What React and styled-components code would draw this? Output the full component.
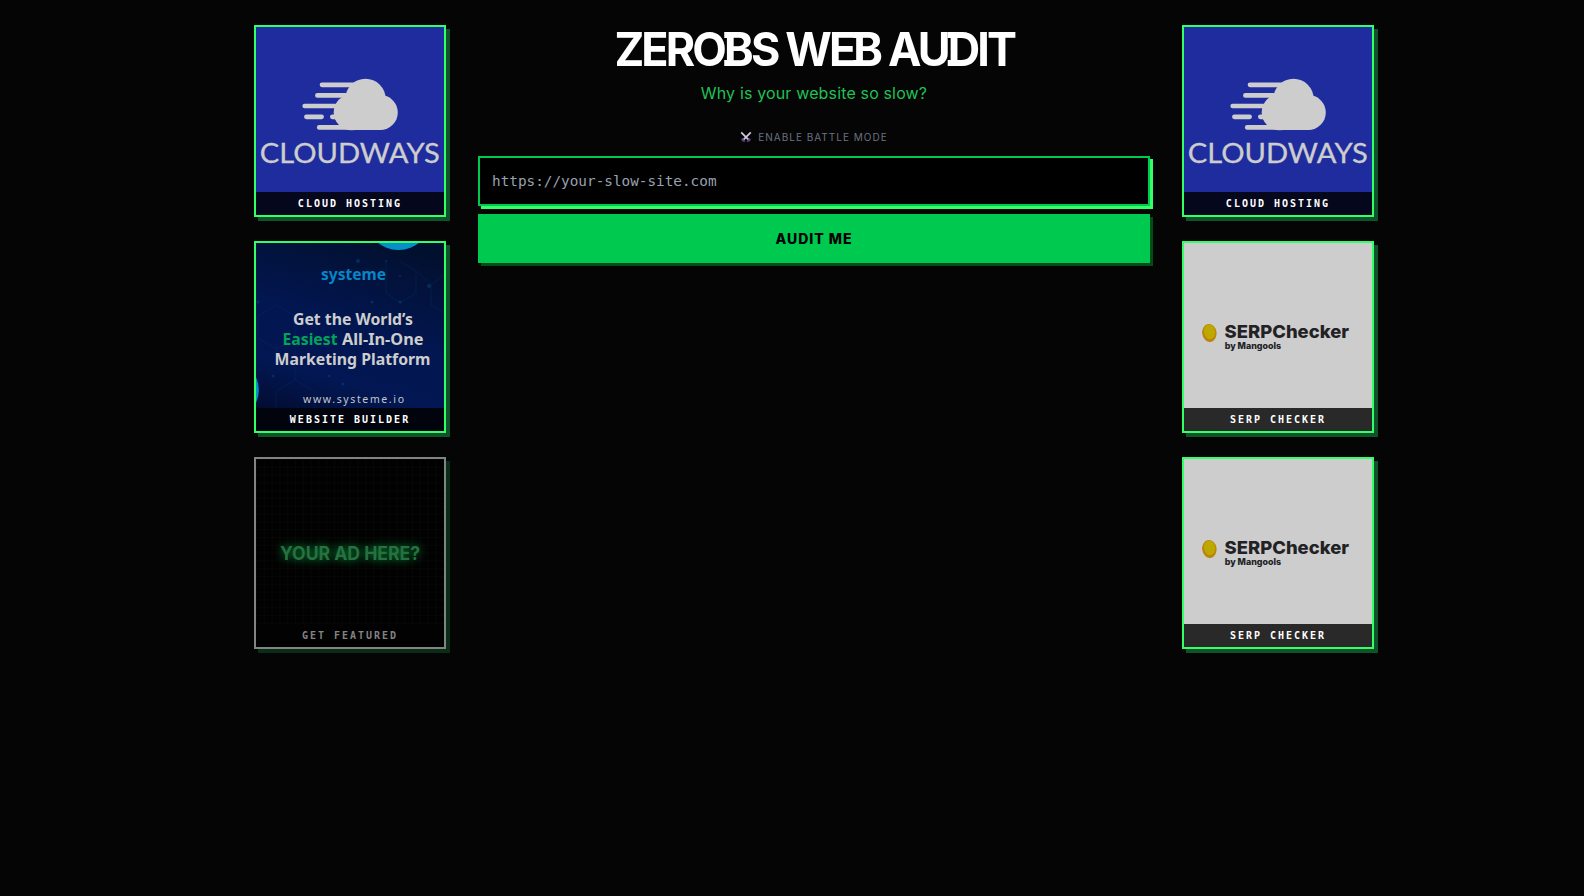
import React from 'react';
import styled, { createGlobalStyle } from 'styled-components';

const GlobalStyle = createGlobalStyle`
    * {
        box-sizing: border-box;
    }

    body {
        margin: 0;
        background: #050505;
        color: #ffffff;
        font-family: Inter, sans-serif;
    }
`;

const CloudwaysBanner = () => (
    <Banner viewBox="0 0 188 188">
        <rect width="188" height="188" fill="#1f2c9d" />
        <g fill="#cdcdcd">
            <circle cx="109.5" cy="72" r="20.2" />
            <circle cx="95.7" cy="85.3" r="18" />
            <circle cx="124.3" cy="85.5" r="17.5" />
            <rect x="95" y="80" width="30" height="23" />
        </g>
        <path
            d="M66 57.8H100M61.4 68.4H92M48.7 79H85M50.4 89.8H65.6M76.3 89.8H85M63.2 100.4H96"
            stroke="#cdcdcd"
            strokeWidth="4.7"
            strokeLinecap="round"
        />
        <text
            x="3.8"
            y="135.8"
            textLength="180"
            lengthAdjust="spacingAndGlyphs"
            fontFamily="Lato"
            fontSize="27.3"
            fill="#cdcdcd"
            stroke="#cdcdcd"
            strokeWidth="0.3"
        >
            CLOUDWAYS
        </text>
    </Banner>
);

const SystemeBanner = () => (
    <Banner viewBox="0 0 188 188">
        <defs>
            <linearGradient id="navy" x1="0.7" y1="0" x2="0.4" y2="1">
                <stop offset="0" stopColor="#02102f" />
                <stop offset="0.45" stopColor="#021650" />
                <stop offset="0.75" stopColor="#021753" />
                <stop offset="1" stopColor="#020c30" />
            </linearGradient>
        </defs>
        <rect width="188" height="188" fill="url(#navy)" />
        <g fill="none" stroke="#0a3a74" strokeWidth="0.7" opacity="0.4">
            <path d="M20.5 62L39 73V95L20.5 106L2 95V73Z" />
            <path d="M39 137L58 148V168M39 137L20 148V168M39 137V106" />
            <path d="M160 28L175 42V62L188 70M175 42L188 32M130 18V50L144 60L160 50V28L144 18" />
        </g>
        <g fill="#0a4a86" opacity="0.45">
            <circle cx="102" cy="18" r="2" />
            <circle cx="173" cy="43" r="2" />
            <circle cx="144" cy="59" r="1.5" />
            <circle cx="116" cy="59" r="1.5" />
            <circle cx="144" cy="33" r="1" />
            <circle cx="130" cy="18" r="1" />
            <circle cx="2" cy="59" r="1.5" />
            <circle cx="17" cy="133" r="1.5" />
            <circle cx="73" cy="133" r="1.2" />
            <circle cx="87" cy="141" r="1.5" />
        </g>
        <circle cx="142.5" cy="-26" r="33" fill="#0590ca" />
        <circle cx="-27" cy="147" r="29.8" fill="#0590ca" />
        <g fontFamily="Noto Sans, sans-serif" fontSize="16.5" fontWeight="700" fill="#cdcdcd">
            <text x="65" y="37" textLength="65" lengthAdjust="spacingAndGlyphs" fill="#0785c7">systeme</text>
            <text x="37" y="82" textLength="120" lengthAdjust="spacingAndGlyphs">Get the World’s</text>
            <text x="26.5" y="102" textLength="55" lengthAdjust="spacingAndGlyphs" fill="#02a35b">Easiest</text>
            <text x="86" y="102" textLength="81.5" lengthAdjust="spacingAndGlyphs">All-In-One</text>
            <text x="18.5" y="122.3" textLength="156" lengthAdjust="spacingAndGlyphs">Marketing Platform</text>
        </g>
        <text x="47" y="160" textLength="101" fontFamily="Noto Sans, sans-serif" fontSize="10.5" fill="#c3c7d0">
            www.systeme.io
        </text>
    </Banner>
);

const PlaceholderBanner = () => (
    <Banner viewBox="0 0 188 188">
        <defs>
            <pattern id="grid" width="7.8" height="7.8" patternUnits="userSpaceOnUse">
                <path d="M0 0.5H7.8M0.5 0V7.8" stroke="#1d1d1d" strokeWidth="0.6" />
            </pattern>
            <filter id="glow" x="-20%" y="-120%" width="140%" height="340%">
                <feGaussianBlur stdDeviation="5" />
            </filter>
        </defs>
        <rect width="188" height="188" fill="#010101" />
        <rect width="188" height="188" fill="url(#grid)" opacity="0.28" />
        <g fontFamily="Inter" fontSize="18.5" fontWeight="700">
            <text x="24" y="101" textLength="140" lengthAdjust="spacingAndGlyphs" fill="#009a3a" filter="url(#glow)">YOUR AD HERE?</text>
            <text x="24" y="101" textLength="140" lengthAdjust="spacingAndGlyphs" fill="#277140">YOUR AD HERE?</text>
        </g>
    </Banner>
);

const SerpBanner = () => (
    <Banner viewBox="0 0 188 188">
        <rect width="188" height="188" fill="#cdcdcd" />
        <ellipse cx="25.4" cy="90" rx="7.2" ry="9" fill="#bd8209" transform="rotate(-8 25.4 90)" />
        <ellipse cx="25.6" cy="88.8" rx="5.7" ry="7.4" fill="#bda800" transform="rotate(-8 25.6 88.8)" />
        <g fontFamily="Inter" fontWeight="800" fill="#222225">
            <text x="40.5" y="95" textLength="124.5" lengthAdjust="spacingAndGlyphs" fontSize="18">SERPChecker</text>
            <text x="40.7" y="105.7" textLength="56.3" lengthAdjust="spacingAndGlyphs" fontSize="8.8">by Mangools</text>
        </g>
    </Banner>
);

const SwordsIcon = () => (
    <Swords viewBox="0 0 12 12">
        <path d="M2 9.9L4 7.9M10 9.9L8 7.9M1.6 7.6L4.8 10.6M10.4 7.6L7.2 10.6" stroke="#5e4685" strokeWidth="1.5" />
        <path d="M1.2 1.3L8.2 8.3M10.8 1.3L3.8 8.3" stroke="#d0c8da" strokeWidth="1.8" />
    </Swords>
);

const leftAds = [
    { label: 'CLOUD HOSTING', banner: <CloudwaysBanner />, tint: '#05071c' },
    { label: 'WEBSITE BUILDER', banner: <SystemeBanner />, tint: '#01040d' },
    { label: 'GET FEATURED', banner: <PlaceholderBanner />, tint: '#020202', muted: true }
];

const rightAds = [
    { label: 'CLOUD HOSTING', banner: <CloudwaysBanner />, tint: '#05071c' },
    { label: 'SERP CHECKER', banner: <SerpBanner />, tint: '#292929' },
    { label: 'SERP CHECKER', banner: <SerpBanner />, tint: '#292929' }
];

const AdColumn = ({ ads }) => (
    <Column>
        {ads.map((ad, index) => (
            <AdCard key={index} $muted={ad.muted}>
                {ad.banner}
                <AdLabel $tint={ad.tint} $muted={ad.muted}>{ad.label}</AdLabel>
            </AdCard>
        ))}
    </Column>
);

const App = () => (
    <>
        <GlobalStyle />
        <Page>
            <AdColumn ads={leftAds} />
            <Main>
                <Title>
                    ZERO<Spurred>B</Spurred>S WE<Spurred>B</Spurred> AU<Spurred>D</Spurred>IT
                </Title>
                <Subtitle>Why is your website so slow?</Subtitle>
                <BattleToggle type="button">
                    <SwordsIcon />
                    ENABLE BATTLE MODE
                </BattleToggle>
                <AuditForm onSubmit={(e) => e.preventDefault()}>
                    <UrlInput type="text" placeholder="https://your-slow-site.com" />
                    <AuditButton type="submit">AUDIT ME</AuditButton>
                </AuditForm>
            </Main>
            <AdColumn ads={rightAds} />
        </Page>
    </>
);

// Styled Components
const Page = styled.div`
    display: flex;
    justify-content: center;
    align-items: flex-start;
    gap: 32px;
    min-height: 100vh;
    padding: 25px 0 0 44px;
`;

const Column = styled.aside`
    display: flex;
    flex-direction: column;
    gap: 24px;
    width: 192px;
    flex-shrink: 0;
`;

const AdCard = styled.a`
    display: grid;
    height: 192px;
    border: 2px solid ${(props) => (props.$muted ? '#838383' : '#33ff66')};
    box-shadow: 4px 4px 0 ${(props) => (props.$muted ? '#092d17' : '#0e532a')};
    overflow: hidden;
`;

const Banner = styled.svg`
    display: block;
    grid-area: 1 / 1;
    width: 188px;
    height: 188px;
`;

const AdLabel = styled.div`
    grid-area: 1 / 1;
    align-self: end;
    z-index: 1;
    height: 23px;
    background: ${(props) => props.$tint};
    color: ${(props) => (props.$muted ? '#838383' : '#ffffff')};
    font-family: 'DejaVu Sans Mono', monospace;
    font-size: 10px;
    font-weight: 700;
    line-height: 23px;
    letter-spacing: 2px;
    text-align: center;
`;

const Main = styled.main`
    display: flex;
    flex-direction: column;
    align-items: center;
    width: 672px;
`;

const Title = styled.h1`
    margin: 0;
    height: 48px;
    font-size: 47px;
    font-weight: 700;
    line-height: 48px;
    letter-spacing: -3px;
    white-space: nowrap;
    transform: scaleX(0.955);
`;

/* slab serifs on the left of the stem */
const Spurred = styled.span`
    background:
        linear-gradient(#ffffff, #ffffff) 0 12px / 8px 6px no-repeat,
        linear-gradient(#ffffff, #ffffff) 0 40px / 8px 6px no-repeat;
`;

const Subtitle = styled.p`
    margin: 8px 0 0;
    height: 24px;
    color: #1fc156;
    font-size: 16px;
    line-height: 25px;
    letter-spacing: 0.15px;
    white-space: nowrap;
`;

const BattleToggle = styled.button`
    display: flex;
    align-items: center;
    gap: 6px;
    height: 16px;
    margin-top: 24px;
    padding: 0;
    border: 0;
    background: none;
    color: #6a7282;
    font-family: Inter, sans-serif;
    font-size: 10px;
    line-height: 16px;
    letter-spacing: 1px;
`;

const Swords = styled.svg`
    width: 12px;
    height: 12px;
    fill: none;
`;

const AuditForm = styled.form`
    display: flex;
    flex-direction: column;
    gap: 8px;
    width: 100%;
    margin-top: 11px;
`;

const UrlInput = styled.input`
    width: 100%;
    height: 50px;
    padding: 0 12px;
    border: 2px solid #00c950;
    border-radius: 0;
    outline: none;
    background: #000000;
    box-shadow: 3px 3px 0 #33ff66;
    color: #ffffff;
    font-family: 'DejaVu Sans Mono', monospace;
    font-size: 14.35px;

    &::placeholder {
        color: #99a1af;
        opacity: 1;
    }
`;

const AuditButton = styled.button`
    height: 49px;
    padding: 0;
    border: 0;
    background: #00c950;
    box-shadow: 3px 3px 0 #014b17;
    color: #000000;
    font-family: Inter, sans-serif;
    font-size: 14px;
    font-weight: 800;
    letter-spacing: 1px;
`;

export default App;
